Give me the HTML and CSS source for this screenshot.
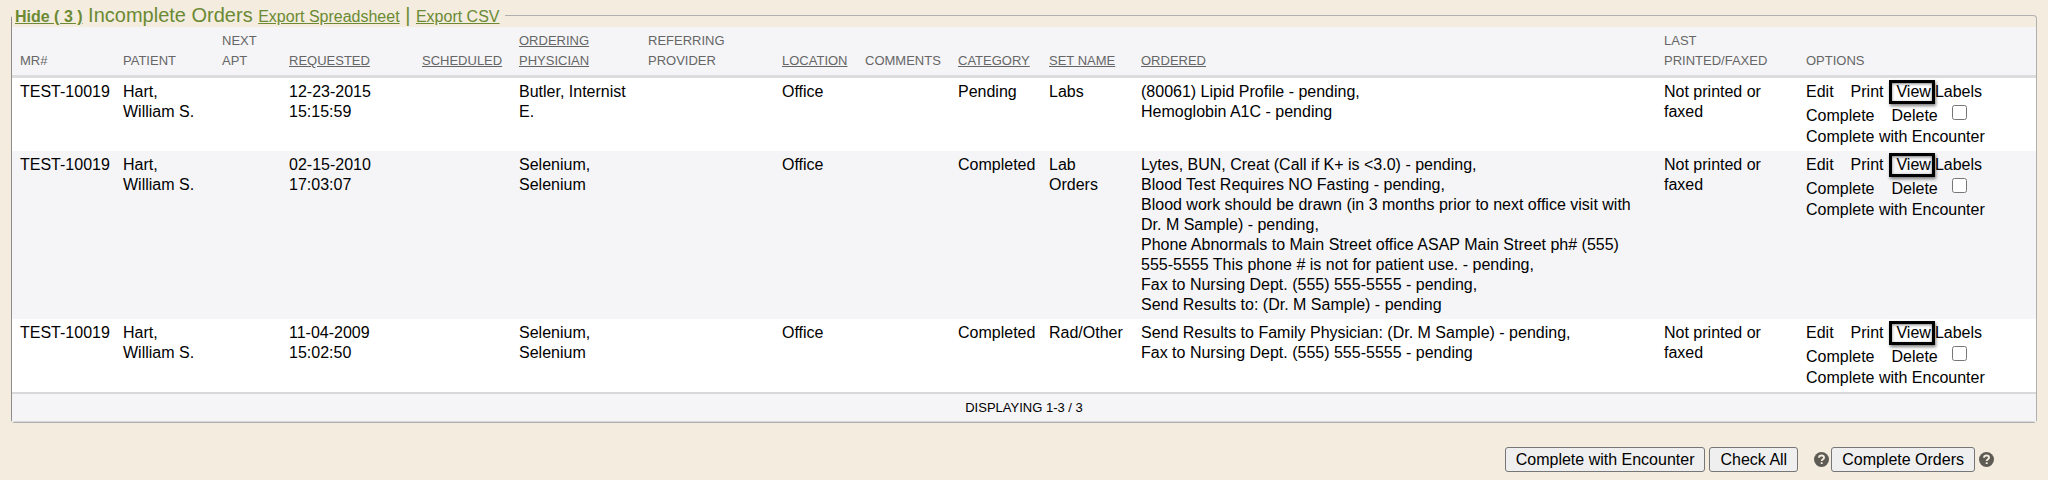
FILE: index.html
```
<!DOCTYPE html>
<html lang="en">
<head>
    <meta charset="UTF-8">
    <meta name="viewport" content="width=device-width, initial-scale=1.0">
    <title>Incomplete Orders</title>
    <link rel="stylesheet" href="styles.css">
</head>
<body>

    <fieldset class="orders">
        <legend>
            <a href="#" class="toggle">Hide ( 3 )</a>
            Incomplete Orders
            <a href="#">Export Spreadsheet</a>
            |
            <a href="#">Export CSV</a>
        </legend>

        <table class="orders-table">
            <colgroup>
                <col class="col-mr">
                <col class="col-patient">
                <col class="col-apt">
                <col class="col-requested">
                <col class="col-scheduled">
                <col class="col-physician">
                <col class="col-provider">
                <col class="col-location">
                <col class="col-comments">
                <col class="col-category">
                <col class="col-set">
                <col class="col-ordered">
                <col class="col-printed">
                <col class="col-options">
            </colgroup>
            <thead>
                <tr>
                    <th>MR#</th>
                    <th>PATIENT</th>
                    <th>NEXT APT</th>
                    <th><a href="#">REQUESTED</a></th>
                    <th><a href="#">SCHEDULED</a></th>
                    <th><a href="#">ORDERING PHYSICIAN</a></th>
                    <th>REFERRING PROVIDER</th>
                    <th><a href="#">LOCATION</a></th>
                    <th>COMMENTS</th>
                    <th><a href="#">CATEGORY</a></th>
                    <th><a href="#">SET NAME</a></th>
                    <th><a href="#">ORDERED</a></th>
                    <th>LAST PRINTED/FAXED</th>
                    <th>OPTIONS</th>
                </tr>
            </thead>
            <tbody>
                <tr>
                    <td class="mr">TEST-10019</td>
                    <td>Hart, William S.</td>
                    <td></td>
                    <td>12-23-2015 15:15:59</td>
                    <td></td>
                    <td>Butler, Internist E.</td>
                    <td></td>
                    <td>Office</td>
                    <td></td>
                    <td>Pending</td>
                    <td>Labs</td>
                    <td>
                        (80061) Lipid Profile - pending,<br>
                        Hemoglobin A1C - pending
                    </td>
                    <td>Not printed or faxed</td>
                    <td>
                        <div class="options">
                            <a href="#">Edit</a>
                            <a href="#">Print</a>
                            <a href="#" class="view">View</a>
                            <a href="#">Labels</a>
                        </div>
                        <div class="options second">
                            <a href="#">Complete</a>
                            <a href="#">Delete</a>
                            <input type="checkbox" id="encounter-1">
                        </div>
                        <label for="encounter-1">Complete with Encounter</label>
                    </td>
                </tr>
                <tr>
                    <td class="mr">TEST-10019</td>
                    <td>Hart, William S.</td>
                    <td></td>
                    <td>02-15-2010 17:03:07</td>
                    <td></td>
                    <td>Selenium, Selenium</td>
                    <td></td>
                    <td>Office</td>
                    <td></td>
                    <td>Completed</td>
                    <td>Lab Orders</td>
                    <td>
                        Lytes, BUN, Creat (Call if K+ is &lt;3.0) - pending,<br>
                        Blood Test Requires NO Fasting - pending,<br>
                        Blood work should be drawn (in 3 months prior to next office visit with Dr. M Sample) - pending,<br>
                        Phone Abnormals to Main Street office ASAP Main Street ph# (555) 555-5555 This phone # is not for patient use. - pending,<br>
                        Fax to Nursing Dept. (555) 555-5555 - pending,<br>
                        Send Results to: (Dr. M Sample) - pending
                    </td>
                    <td>Not printed or faxed</td>
                    <td>
                        <div class="options">
                            <a href="#">Edit</a>
                            <a href="#">Print</a>
                            <a href="#" class="view">View</a>
                            <a href="#">Labels</a>
                        </div>
                        <div class="options second">
                            <a href="#">Complete</a>
                            <a href="#">Delete</a>
                            <input type="checkbox" id="encounter-2">
                        </div>
                        <label for="encounter-2">Complete with Encounter</label>
                    </td>
                </tr>
                <tr>
                    <td class="mr">TEST-10019</td>
                    <td>Hart, William S.</td>
                    <td></td>
                    <td>11-04-2009 15:02:50</td>
                    <td></td>
                    <td>Selenium, Selenium</td>
                    <td></td>
                    <td>Office</td>
                    <td></td>
                    <td>Completed</td>
                    <td>Rad/Other</td>
                    <td>
                        Send Results to Family Physician: (Dr. M Sample) - pending,<br>
                        Fax to Nursing Dept. (555) 555-5555 - pending
                    </td>
                    <td>Not printed or faxed</td>
                    <td>
                        <div class="options">
                            <a href="#">Edit</a>
                            <a href="#">Print</a>
                            <a href="#" class="view">View</a>
                            <a href="#">Labels</a>
                        </div>
                        <div class="options second">
                            <a href="#">Complete</a>
                            <a href="#">Delete</a>
                            <input type="checkbox" id="encounter-3">
                        </div>
                        <label for="encounter-3">Complete with Encounter</label>
                    </td>
                </tr>
            </tbody>
            <tfoot>
                <tr>
                    <td colspan="14">DISPLAYING 1-3 / 3</td>
                </tr>
            </tfoot>
        </table>
    </fieldset>

    <div class="actions">
        <button type="button">Complete with Encounter</button>
        <button type="button" class="check-all">Check All</button>
        <svg class="help" viewBox="0 0 16 16" role="img" aria-label="Help">
            <circle cx="8" cy="8" r="8" />
            <path d="M5.3 6.2C5.4 4.5 6.5 3.7 8 3.7s2.7.9 2.7 2.3c0 1.7-2.5 1.8-2.5 3.5M8.2 10.9v2" />
        </svg>
        <button type="button" class="complete">Complete Orders</button>
        <svg class="help" viewBox="0 0 16 16" role="img" aria-label="Help">
            <circle cx="8" cy="8" r="8" />
            <path d="M5.3 6.2C5.4 4.5 6.5 3.7 8 3.7s2.7.9 2.7 2.3c0 1.7-2.5 1.8-2.5 3.5M8.2 10.9v2" />
        </svg>
    </div>

</body>
</html>
```
FILE: styles.css
```
body {
    margin: 0;
    padding: 3px 11px 6px;
    background-color: #f3ecdf;
    font-family: "Liberation Sans", Arial, sans-serif;
    font-size: 16px;
    line-height: 20px;
    color: #000;
}

/* Frame and title */
.orders {
    min-width: 0;
    margin: 0;
    padding: 0;
    border: 1px solid #b0b0b0;
    border-left-color: #8c8c8c;
    border-radius: 4px;
}
.orders legend {
    padding: 0 5px 0 3px;
    font-size: 20px;
    line-height: 24px;
    color: #6b8a33;
}
.orders legend a {
    font-size: 16px;
    line-height: 20px;
    color: #6b8a33;
}
.orders legend .toggle {
    font-weight: bold;
}

/* Orders table */
.orders-table {
    width: 100%;
    table-layout: fixed;
    border-collapse: separate;
    border-spacing: 0;
    background-color: #fff;
}
.col-mr { width: 103px; }
.col-patient { width: 99px; }
.col-apt { width: 67px; }
.col-requested { width: 133px; }
.col-scheduled { width: 97px; }
.col-physician { width: 129px; }
.col-provider { width: 134px; }
.col-location { width: 83px; }
.col-comments { width: 93px; }
.col-category { width: 91px; }
.col-set { width: 92px; }
.col-printed { width: 142px; }
.col-options { width: 238px; }

.orders-table th {
    padding: 4px 6px 4px 8px;
    background-color: #f5f5f8;
    border-bottom: 3px solid #dcdcdc;
    font-size: 13px;
    font-weight: normal;
    text-align: left;
    vertical-align: bottom;
    color: #666;
}
.orders-table th a {
    color: #666;
}
.orders-table td {
    padding: 4px 6px 4px 8px;
    vertical-align: top;
}
.orders-table .mr {
    white-space: nowrap;
}
.orders-table tbody tr:nth-child(even) {
    background-color: #f5f5f8;
}
.orders-table tfoot td {
    padding: 4px 8px 3px;
    background-color: #f5f5f8;
    border-top: 2px solid #d8d8d8;
    border-bottom: 1px solid #d8d8d8;
    border-radius: 0 0 3px 3px;
    font-size: 13px;
    text-align: center;
}

/* Row options */
.options {
    display: flex;
    align-items: center;
    height: 20px;
}
.options a {
    margin-right: 17px;
    color: #000;
    text-decoration: none;
}
.options a:nth-child(2) {
    margin-right: 6px;
}
.options .view {
    margin: -3px 0;
    padding: 0 1px 0 4px;
    line-height: 18px;
    border: 3px solid #000;
    box-shadow: 1px 2px 3px rgba(0, 0, 0, 0.5), inset 0 1px 3px rgba(0, 0, 0, 0.5);
}
.options .view + a {
    margin-right: 0;
}
.options.second {
    height: 25px;
}
.options.second a {
    padding-top: 2px;
}
.options input {
    width: 15px;
    height: 15px;
    margin: 0 0 4px 8px;
}

/* Buttons under the table */
.actions {
    display: flex;
    justify-content: flex-end;
    align-items: center;
    margin-top: 24px;
    padding-right: 43px;
}
.actions button {
    height: 25px;
    margin: 0;
    padding: 0 10px;
    border: 1px solid #767676;
    border-radius: 3px;
    background-color: #efefef;
    font-family: inherit;
    font-size: 16px;
    color: #000;
}
.actions .check-all {
    margin: 0 16px 0 4px;
}
.actions .complete {
    margin: 0 4px 0 2px;
}
.help {
    width: 15px;
    height: 15px;
}
.help circle {
    fill: #5e5b55;
}
.help path {
    fill: none;
    stroke: #f3ecdf;
    stroke-width: 2;
}
```
